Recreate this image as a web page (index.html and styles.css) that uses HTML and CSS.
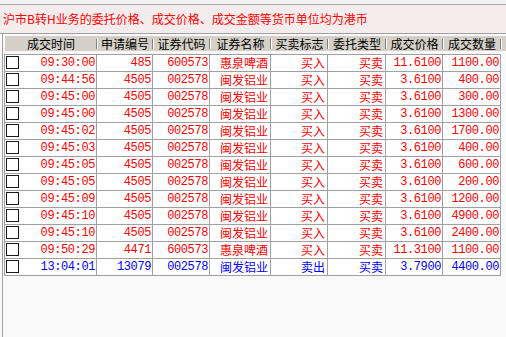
FILE: index.html
```html
<!DOCTYPE html>
<html>
<head>
<meta charset="utf-8">
<link rel="stylesheet" href="styles.css">
</head>
<body>
<div class="topstrip"></div>
<div class="notice">沪市<span class="lat">B</span>转<span class="lat">H</span>业务的委托价格、成交价格、成交金额等货币单位均为港币</div>
<div class="main">
  <div class="head">
    <div class="h">成交时间</div>
    <div class="h sep">申请编号</div>
    <div class="h sep">证券代码</div>
    <div class="h sep">证券名称</div>
    <div class="h sep">买卖标志</div>
    <div class="h sep">委托类型</div>
    <div class="h sep">成交价格</div>
    <div class="h sep">成交数量</div>
    <div class="h sep last"></div>
  </div>
  <div class="grid">
    <div class="row red"><div class="c first"><span class="cb"></span><span class="n">09:30:00</span></div><div class="c n">485</div><div class="c n">600573</div><div class="c z">惠泉啤酒</div><div class="c z">买入</div><div class="c z">买卖</div><div class="c n">11.6100</div><div class="c n">1100.00</div></div>
    <div class="row red"><div class="c first"><span class="cb"></span><span class="n">09:44:56</span></div><div class="c n">4505</div><div class="c n">002578</div><div class="c z">闽发铝业</div><div class="c z">买入</div><div class="c z">买卖</div><div class="c n">3.6100</div><div class="c n">400.00</div></div>
    <div class="row red"><div class="c first"><span class="cb"></span><span class="n">09:45:00</span></div><div class="c n">4505</div><div class="c n">002578</div><div class="c z">闽发铝业</div><div class="c z">买入</div><div class="c z">买卖</div><div class="c n">3.6100</div><div class="c n">300.00</div></div>
    <div class="row red"><div class="c first"><span class="cb"></span><span class="n">09:45:00</span></div><div class="c n">4505</div><div class="c n">002578</div><div class="c z">闽发铝业</div><div class="c z">买入</div><div class="c z">买卖</div><div class="c n">3.6100</div><div class="c n">1300.00</div></div>
    <div class="row red"><div class="c first"><span class="cb"></span><span class="n">09:45:02</span></div><div class="c n">4505</div><div class="c n">002578</div><div class="c z">闽发铝业</div><div class="c z">买入</div><div class="c z">买卖</div><div class="c n">3.6100</div><div class="c n">1700.00</div></div>
    <div class="row red"><div class="c first"><span class="cb"></span><span class="n">09:45:03</span></div><div class="c n">4505</div><div class="c n">002578</div><div class="c z">闽发铝业</div><div class="c z">买入</div><div class="c z">买卖</div><div class="c n">3.6100</div><div class="c n">400.00</div></div>
    <div class="row red"><div class="c first"><span class="cb"></span><span class="n">09:45:05</span></div><div class="c n">4505</div><div class="c n">002578</div><div class="c z">闽发铝业</div><div class="c z">买入</div><div class="c z">买卖</div><div class="c n">3.6100</div><div class="c n">600.00</div></div>
    <div class="row red"><div class="c first"><span class="cb"></span><span class="n">09:45:05</span></div><div class="c n">4505</div><div class="c n">002578</div><div class="c z">闽发铝业</div><div class="c z">买入</div><div class="c z">买卖</div><div class="c n">3.6100</div><div class="c n">200.00</div></div>
    <div class="row red"><div class="c first"><span class="cb"></span><span class="n">09:45:09</span></div><div class="c n">4505</div><div class="c n">002578</div><div class="c z">闽发铝业</div><div class="c z">买入</div><div class="c z">买卖</div><div class="c n">3.6100</div><div class="c n">1200.00</div></div>
    <div class="row red"><div class="c first"><span class="cb"></span><span class="n">09:45:10</span></div><div class="c n">4505</div><div class="c n">002578</div><div class="c z">闽发铝业</div><div class="c z">买入</div><div class="c z">买卖</div><div class="c n">3.6100</div><div class="c n">4900.00</div></div>
    <div class="row red"><div class="c first"><span class="cb"></span><span class="n">09:45:10</span></div><div class="c n">4505</div><div class="c n">002578</div><div class="c z">闽发铝业</div><div class="c z">买入</div><div class="c z">买卖</div><div class="c n">3.6100</div><div class="c n">2400.00</div></div>
    <div class="row red"><div class="c first"><span class="cb"></span><span class="n">09:50:29</span></div><div class="c n">4471</div><div class="c n">600573</div><div class="c z">惠泉啤酒</div><div class="c z">买入</div><div class="c z">买卖</div><div class="c n">11.3100</div><div class="c n">1100.00</div></div>
    <div class="row blue"><div class="c first"><span class="cb"></span><span class="n">13:04:01</span></div><div class="c n">13079</div><div class="c n">002578</div><div class="c z">闽发铝业</div><div class="c z">卖出</div><div class="c z">买卖</div><div class="c n">3.7900</div><div class="c n">4400.00</div></div>
  </div>
</div>
</body>
</html>
```

FILE: styles.css
```css
* { box-sizing: border-box; }
html, body { margin: 0; padding: 0; }
body {
  width: 506px;
  height: 337px;
  overflow: hidden;
  background: #f9f9f9;
  font-family: "Noto Sans CJK SC", sans-serif;
  font-size: 12px;
}
.topstrip {
  height: 5px;
  background: #f0f0f0;
  border-bottom: 1px solid #a8a8a8;
}
.notice {
  height: 29px;
  padding-left: 3px;
  line-height: 27px;
  color: #ff0000;
  background: #f5eded;
  border-bottom: 1px solid #a0a0a0;
  white-space: nowrap;
}
.lat {
  letter-spacing: -2px;
  margin-right: 2px;
}
.main {
  margin-left: 2px;
  height: 303px;
  padding: 2px 0 0 1px;
  border-left: 1px solid #a0a0a0;
}
.head {
  display: grid;
  grid-template-columns: 92px 56px 57px 61px 57px 58px 57px 58px 1fr;
  height: 15px;
  background: #d4d0c8;
  margin-left: 1px;
}
.h {
  position: relative;
  text-align: center;
  line-height: 15px;
  color: #000;
  white-space: nowrap;
}
.sep::before {
  content: "";
  position: absolute;
  left: -1px;
  top: 3px;
  height: 10px;
  width: 1px;
  background: #808080;
  box-shadow: 1px 0 0 #ffffff;
}
.grid {
  margin-top: 3px;
  width: 497px;
  border-left: 1px solid #a0a0a0;
  border-top: 1px solid #a0a0a0;
  background: #ffffff;
}
.row {
  display: grid;
  grid-template-columns: 92px 56px 57px 61px 57px 58px 57px 58px;
  height: 17px;
}
.red { color: #ff0000; }
.blue { color: #0000ff; }
.c {
  height: 17px;
  border-right: 1px solid #a0a0a0;
  border-bottom: 1px solid #a0a0a0;
  padding-right: 2px;
  text-align: right;
  line-height: 16px;
  white-space: nowrap;
  overflow: hidden;
}
.n {
  font-family: "Liberation Mono", monospace;
  font-size: 12px;
  letter-spacing: -0.4px;
}
.c.n { padding-right: 1px; }
.z {
  font-family: "Noto Sans CJK SC", sans-serif;
  font-size: 12px;
}
.first {
  display: flex;
  justify-content: space-between;
  align-items: center;
  padding-left: 1px;
  padding-right: 1px;
}
.cb {
  width: 13px;
  height: 13px;
  border: 1px solid #1a1a1a;
  background: #ffffff;
  margin-top: -1px;
}
```
